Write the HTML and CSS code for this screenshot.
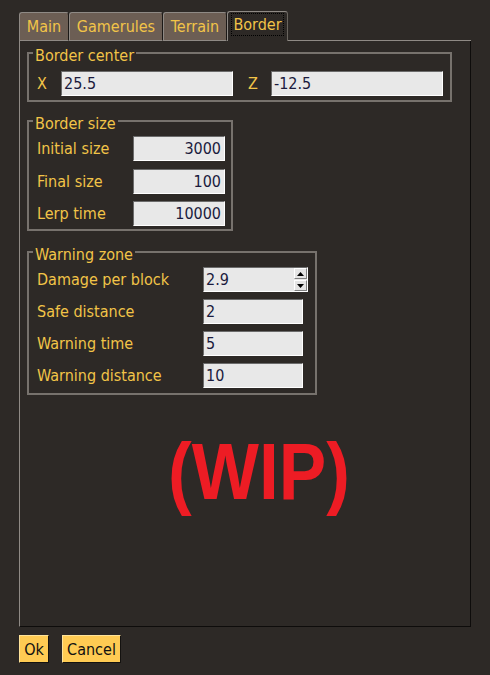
FILE: index.html
```html
<!DOCTYPE html>
<html>
<head>
<meta charset="utf-8">
<link rel="stylesheet" href="styles.css">
</head>
<body>
<div class="window">
  <div class="tabs">
    <div class="tab t-main">Main</div>
    <div class="tab t-game">Gamerules</div>
    <div class="tab t-terrain">Terrain</div>
    <div class="tab active t-border"><span class="focus">Border</span></div>
    <div class="filler"></div>
  </div>
  <div class="panel">
    <div class="group g1">
      <div class="legend">Border center</div>
      <div class="xz">
        <span class="axis">X</span>
        <div class="input wide">25.5</div>
        <span class="axis z">Z</span>
        <div class="input wide">-12.5</div>
      </div>
    </div>
    <div class="group g2">
      <div class="legend">Border size</div>
      <div class="rows">
        <div class="row"><span class="label">Initial size</span><div class="input num w92">3000</div></div>
        <div class="row"><span class="label">Final size</span><div class="input num w92">100</div></div>
        <div class="row"><span class="label">Lerp time</span><div class="input num w92">10000</div></div>
      </div>
    </div>
    <div class="group g3">
      <div class="legend">Warning zone</div>
      <div class="grid3">
        <span class="label">Damage per block</span>
        <div class="input spin">
          <span class="spinval">2.9</span>
          <span class="spinbtns">
            <span class="sbtn"><svg width="7" height="4" viewBox="0 0 7 4"><path d="M3.5 0 L7 4 L0 4 Z" fill="#000"/></svg></span>
            <span class="sbtn"><svg width="7" height="4" viewBox="0 0 7 4"><path d="M0 0 L7 0 L3.5 4 Z" fill="#000"/></svg></span>
          </span>
        </div>
        <span class="label">Safe distance</span>
        <div class="input w100">2</div>
        <span class="label">Warning time</span>
        <div class="input w100">5</div>
        <span class="label">Warning distance</span>
        <div class="input w100">10</div>
      </div>
    </div>
    <div class="wip">(WIP)</div>
  </div>
  <div class="buttons">
    <button class="btn ok">Ok</button>
    <button class="btn cancel">Cancel</button>
  </div>
</div>
</body>
</html>
```
FILE: styles.css
```css
html, body {
  margin: 0;
  background: #2d2926;
}
body {
  width: 490px;
  height: 675px;
  overflow: hidden;
  font-family: "DejaVu Sans Condensed", "DejaVu Sans", sans-serif;
  font-size: 16px;
  color: #f2c448;
}
.window {
  padding: 11px 0 0 19px;
}
.tabs {
  display: flex;
  width: 452px;
  height: 30px;
}
.tab {
  box-sizing: border-box;
  margin-top: 1px;
  height: 29px;
  border: 1px solid;
  border-color: #8f8a85 #1c1917 #8f8a85 #8f8a85;
  border-radius: 3px 3px 0 0;
  background: #6c5e54;
  text-align: center;
  line-height: 27px;
}
.t-main { width: 50px; }
.t-game { width: 94px; }
.t-terrain { width: 64px; }
.t-border { width: 61px; }
.tab.active {
  margin-top: 0;
  height: 30px;
  border-bottom: none;
  border-right-color: #6a655f;
  background: #2d2926;
  display: flex;
  justify-content: center;
  align-items: flex-start;
}
.focus {
  display: block;
  margin-top: 1px;
  padding: 1px 1px 0;
  line-height: 20px;
  border: 1px dotted #000;
}
.filler {
  flex: 1;
  border-bottom: 1px solid #8f8a85;
}
.panel {
  box-sizing: border-box;
  width: 452px;
  height: 586px;
  border-left: 1px solid #8f8a85;
  border-right: 1px solid #0e0c0b;
  border-bottom: 1px solid #0e0c0b;
  padding: 11px 7px 0;
  display: flex;
  flex-direction: column;
  align-items: flex-start;
}
.group {
  box-sizing: border-box;
  border: 2px solid #77726d;
  padding: 0 7px 3px 8px;
  display: flex;
  flex-direction: column;
}
.g1 { width: 425px; height: 50px; }
.g2 { width: 206px; margin-top: 18px; padding-right: 6px; }
.g3 { width: 290px; margin-top: 20px; padding-bottom: 5px; }
.legend {
  align-self: flex-start;
  margin: -7px 0 0 -4px;
  padding: 0 2px;
  height: 18px;
  line-height: 18px;
  background: #2d2926;
}
.xz {
  display: flex;
  align-items: center;
  margin-top: 6px;
}
.axis { width: 24px; }
.axis.z { width: 23px; margin-left: 15px; }
.input {
  box-sizing: border-box;
  height: 25px;
  background: #e8e8e8;
  border: 1px solid;
  border-color: #6b6b6b #ffffff #ffffff #6b6b6b;
  color: #1b1b3d;
  line-height: 23px;
  padding: 0 3px 0 2px;
  white-space: nowrap;
}
.wide { width: 172px; }
.num { text-align: right; }
.w92 { width: 92px; }
.w100 { width: 100px; }
.rows {
  display: flex;
  flex-direction: column;
  gap: 7.5px;
  margin-top: 3px;
}
.row {
  display: flex;
  align-items: center;
  justify-content: space-between;
}
.grid3 {
  display: grid;
  grid-template-columns: 166px 105px;
  row-gap: 7px;
  align-items: center;
  margin-top: 3px;
}
.spin {
  width: 105px;
  display: flex;
  justify-content: space-between;
  padding-right: 0;
}
.spinbtns {
  display: flex;
  flex-direction: column;
  width: 13px;
  gap: 1px;
}
.sbtn {
  box-sizing: border-box;
  height: 11px;
  background: #e4e4e4;
  border: 1px solid;
  border-color: #ffffff #808080 #808080 #ffffff;
  display: flex;
  align-items: center;
  justify-content: center;
}
.sbtn svg { display: block; }
.wip {
  margin: 37px 0 0 141px;
  font-family: "Liberation Sans", Arial, sans-serif;
  font-weight: bold;
  font-size: 80px;
  line-height: 80px;
  color: #ed1c24;
  transform: scaleX(0.89);
  transform-origin: left center;
}
.buttons {
  display: flex;
  gap: 13px;
  margin-top: 8px;
}
.btn {
  box-sizing: border-box;
  height: 28px;
  padding: 0;
  background: #ffcb53;
  border: 1px solid;
  border-color: #ffe39a #141210 #141210 #ffe39a;
  font: inherit;
  color: #111;
}
.ok { width: 30px; }
.cancel { width: 59px; }
```
